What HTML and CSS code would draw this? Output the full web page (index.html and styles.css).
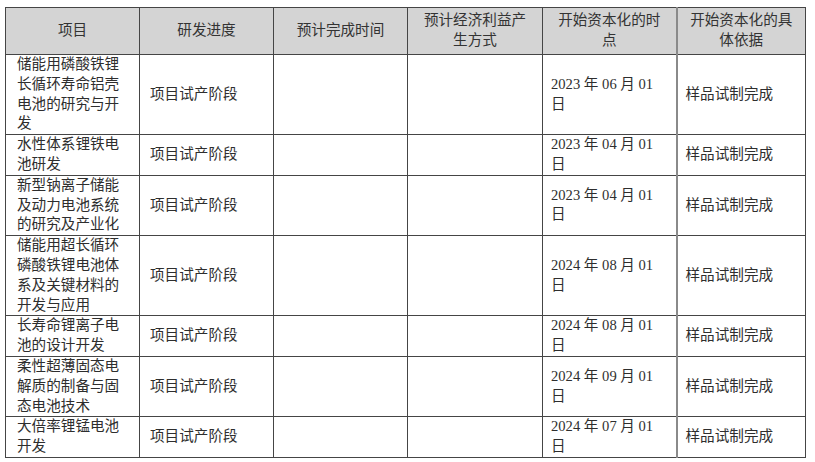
FILE: index.html
```html
<!DOCTYPE html>
<html lang="zh-CN">
<head>
<meta charset="utf-8">
<link rel="stylesheet" href="styles.css">
</head>
<body>
<table class="rd-table">
  <colgroup>
    <col class="c-name"><col class="c-prog"><col class="c-time"><col class="c-econ"><col class="c-start"><col class="c-basis">
  </colgroup>
  <thead>
    <tr class="head-row">
      <th>项目</th>
      <th>研发进度</th>
      <th>预计完成时间</th>
      <th>预计经济利益产生方式</th>
      <th>开始资本化的时点</th>
      <th class="last">开始资本化的具体依据</th>
    </tr>
  </thead>
  <tbody>
    <tr>
      <td class="name">储能用磷酸铁锂长循环寿命铝壳电池的研究与开发</td>
      <td>项目试产阶段</td>
      <td></td>
      <td></td>
      <td class="date">2023 年 06 月 01 日</td>
      <td class="last">样品试制完成</td>
    </tr>
    <tr>
      <td class="name">水性体系锂铁电池研发</td>
      <td>项目试产阶段</td>
      <td></td>
      <td></td>
      <td class="date">2023 年 04 月 01 日</td>
      <td class="last">样品试制完成</td>
    </tr>
    <tr>
      <td class="name">新型钠离子储能及动力电池系统的研究及产业化</td>
      <td>项目试产阶段</td>
      <td></td>
      <td></td>
      <td class="date">2023 年 04 月 01 日</td>
      <td class="last">样品试制完成</td>
    </tr>
    <tr>
      <td class="name">储能用超长循环磷酸铁锂电池体系及关键材料的开发与应用</td>
      <td>项目试产阶段</td>
      <td></td>
      <td></td>
      <td class="date">2024 年 08 月 01 日</td>
      <td class="last">样品试制完成</td>
    </tr>
    <tr>
      <td class="name">长寿命锂离子电池的设计开发</td>
      <td>项目试产阶段</td>
      <td></td>
      <td></td>
      <td class="date">2024 年 08 月 01 日</td>
      <td class="last">样品试制完成</td>
    </tr>
    <tr>
      <td class="name">柔性超薄固态电解质的制备与固态电池技术</td>
      <td>项目试产阶段</td>
      <td></td>
      <td></td>
      <td class="date">2024 年 09 月 01 日</td>
      <td class="last">样品试制完成</td>
    </tr>
    <tr>
      <td class="name">大倍率锂锰电池开发</td>
      <td>项目试产阶段</td>
      <td></td>
      <td></td>
      <td class="date">2024 年 07 月 01 日</td>
      <td class="last">样品试制完成</td>
    </tr>
  </tbody>
</table>
</body>
</html>
```

FILE: styles.css
```css
html, body {
  margin: 0;
  padding: 0;
  background: #ffffff;
}

body {
  font-family: "Liberation Serif", "Noto Sans CJK SC", serif;
  color: #2e2e2e;
  font-size: 14.6px;
}

.rd-table {
  margin: 7px 0 0 5px;
  width: 800px;
  table-layout: fixed;
  border-collapse: collapse;
  border: 1.5px solid #404040;
}

.c-name { width: 134px; }
.c-prog { width: 134px; }
.c-time { width: 134px; }
.c-econ { width: 135px; }
.c-start { width: 134px; }
.c-basis { width: 129px; }

.rd-table th,
.rd-table td {
  border: 1px solid #454545;
  line-height: 19.8px;
  padding: 0 10px;
  vertical-align: middle;
  word-break: break-all;
}

.rd-table th.last,
.rd-table td.last {
  border-left: 2px solid #8a8a8a;
}

.head-row {
  height: 47px;
  background: #d4d4d4;
}

.rd-table th {
  font-weight: normal;
  text-align: center;
  color: #333333;
}

.rd-table td {
  text-align: left;
}

.rd-table td.name {
  padding-left: 11px;
}

.rd-table td.date {
  padding-left: 8px;
  padding-right: 12px;
}

.rd-table td.last {
  padding-left: 8px;
}
```
